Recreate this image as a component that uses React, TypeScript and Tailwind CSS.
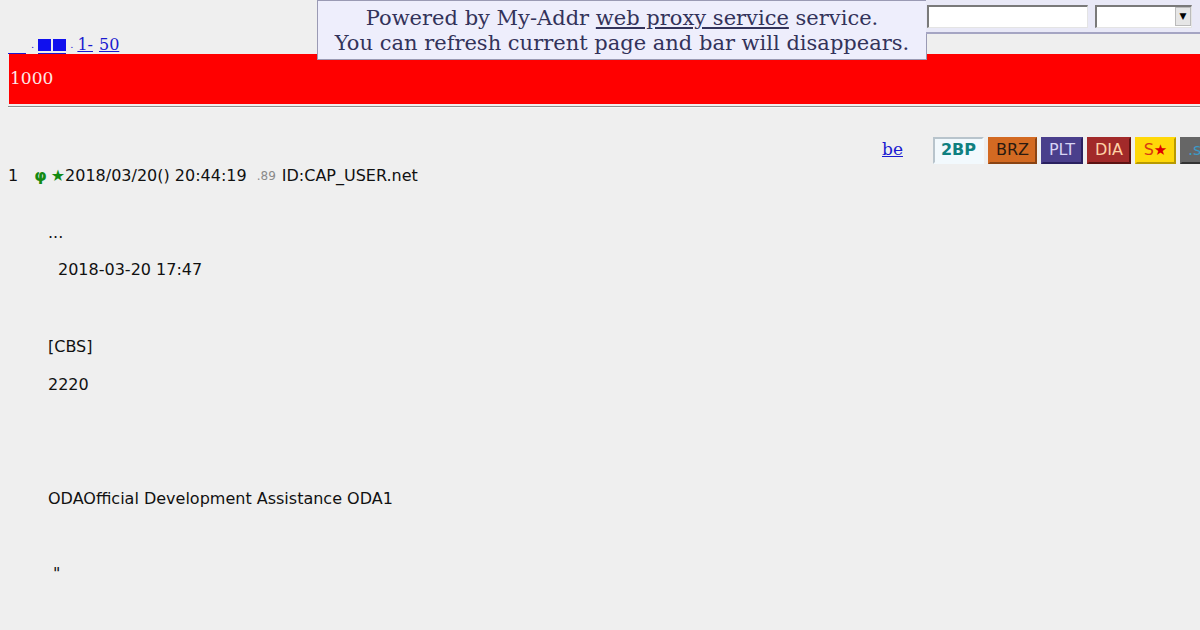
import React from 'react';

const serif = "font-['DejaVu_Serif','Liberation_Serif',serif]";
const sans = "font-['DejaVu_Sans','Liberation_Sans',sans-serif]";

function ProxyNotice() {
  return (
    <div className={`absolute left-[317px] top-0 w-[610px] h-[60px] bg-[#eeeefc] border border-[#9a9ab4] text-[#33335a] text-[21px] leading-[25px] text-center pt-[5px] ${serif}`}>
      <div>
        Powered by My-Addr <a href="#" className="underline">web proxy service</a> service.
      </div>
      <div>You can refresh current page and bar will disappears.</div>
    </div>
  );
}

function ProxyBar() {
  return (
    <div className="absolute right-0 top-0 w-[274px] h-[34px] bg-[#e9e9f7] border-b-2 border-[#a5a5c3] flex items-start gap-[7px] pt-[5px] pl-[1px]">
      <div className="w-[161px] h-[23px] bg-white border-t-2 border-l-2 border-[#7a7a7a] border-b border-r border-b-[#e4e4e4] border-r-[#e4e4e4]" />
      <div className="w-[97px] h-[23px] bg-white border-t-2 border-l-2 border-[#7a7a7a] border-b border-r border-b-[#e4e4e4] border-r-[#e4e4e4] flex justify-end">
        <div className="w-[16px] h-[19px] bg-[#e6e6e6] border border-[#bbb] flex items-center justify-center text-[9px] text-black">▼</div>
      </div>
    </div>
  );
}

const tabs = [
  { label: '2BP', cls: 'bg-[#f2f9fd] text-[#0f8080] font-bold border-t-[#b8c4cc] border-l-[#b8c4cc] border-b-[#f2f9fd] border-r-[#f2f9fd] w-[51px]' },
  { label: 'BRZ', cls: 'bg-[#d36a22] text-[#2a1a10] border-t-[#d36a22] border-l-[#d36a22] border-b-[#8a4414] border-r-[#8a4414] w-[49px]' },
  { label: 'PLT', cls: 'bg-[#4a3f8c] text-[#d8d4f4] border-t-[#4a3f8c] border-l-[#4a3f8c] border-b-[#2a2060] border-r-[#2a2060] w-[42px]' },
  { label: 'DIA', cls: 'bg-[#a22a2a] text-[#ffd2a6] border-t-[#a22a2a] border-l-[#a22a2a] border-b-[#5c1212] border-r-[#5c1212] w-[44px]' },
];

export default function App() {
  return (
    <div className={`relative w-[1200px] h-[630px] overflow-hidden bg-[#efefef] text-[#111] ${sans}`}>
      <div className="w-[1260px] px-2">
        {/* top links */}
        <div className={`h-[54px] pt-[32px] text-[16px] leading-[19px] text-[#1a1ad0] flex items-end ${serif}`}>
          <a href="#" className="inline-block w-[18px] h-[17px] border-b border-[#1a1ad0]" />
          <span className="ml-[5px] text-[10px]">.</span>
          <a href="#" className="ml-[4px] flex items-end gap-[2px] pb-[2px] border-b border-[#1a1ad0]">
            <span className="inline-block w-[13px] h-[12px] bg-[#1010ee]" />
            <span className="inline-block w-[13px] h-[12px] bg-[#1010ee]" />
          </a>
          <span className="ml-[4px] text-[10px]">.</span>
          <a href="#" className="ml-[4px] underline">1-</a>
          <a href="#" className="ml-[6px] underline">50</a>
        </div>

        {/* title bar */}
        <div className={`ml-[1px] h-[50px] bg-[#ff0000] flex items-center pl-[1px] text-[17px] text-[#fde8e8] ${serif}`}>
          1000
        </div>
        <div className="mt-[2px] h-[2px] border-t border-[#8d8d8d] border-b border-b-[#f7f7f7]" />

        {/* board switch */}
        <div className="mt-[28px] flex items-center h-[28px]">
          <a href="#" className={`ml-[874px] underline text-[#1a1ad0] text-[17px] ${serif}`}>be</a>
          <div className="ml-[30px] flex gap-[4px] text-[16px]">
            {tabs.map((t) => (
              <div key={t.label} className={`h-[27px] flex items-center justify-center border-2 ${t.cls}`}>{t.label}</div>
            ))}
            <div className="h-[27px] w-[41px] flex items-center justify-center border-2 bg-[#ffd808] border-[#ffd808] border-b-[#b89a00] border-r-[#b89a00] text-[#d83a10]">
              S<span className="text-[#e00000] text-[15px]">★</span>
            </div>
            <div className="h-[27px] w-[44px] flex items-center pl-[6px] border-2 bg-[#666666] border-[#666666] border-b-[#333] border-r-[#333] text-[#3a9ac8]">.s</div>
          </div>
        </div>

        {/* post header */}
        <div className="mt-[1px] flex items-center h-[21px] text-[16px] whitespace-pre">
          <span>1</span>
          <span className="ml-[16px] text-[#138a13] font-bold">φ</span>
          <span className="ml-[4px] text-[#138a13]">★</span>
          <span>2018/03/20() 20:44:19</span>
          <span className="ml-[10px] text-[12px] text-[#8a8a8a]">.89</span>
          <span className="ml-[6px]">ID:CAP_USER.net</span>
        </div>

        {/* post body */}
        <div className="ml-[40px] text-[16px] leading-[19px] whitespace-pre">
          <div className="mt-[37px]">...</div>
          <div className="mt-[18px] ml-[10px]">2018-03-20 17:47</div>
          <div className="mt-[58px]">[CBS]</div>
          <div className="mt-[19px]">2220</div>
          <div className="mt-[95px]">ODAOfficial Development Assistance ODA1</div>
          <div className="mt-[56px] ml-[5px]">"</div>
        </div>
      </div>

      <ProxyNotice />
      <ProxyBar />
    </div>
  );
}
